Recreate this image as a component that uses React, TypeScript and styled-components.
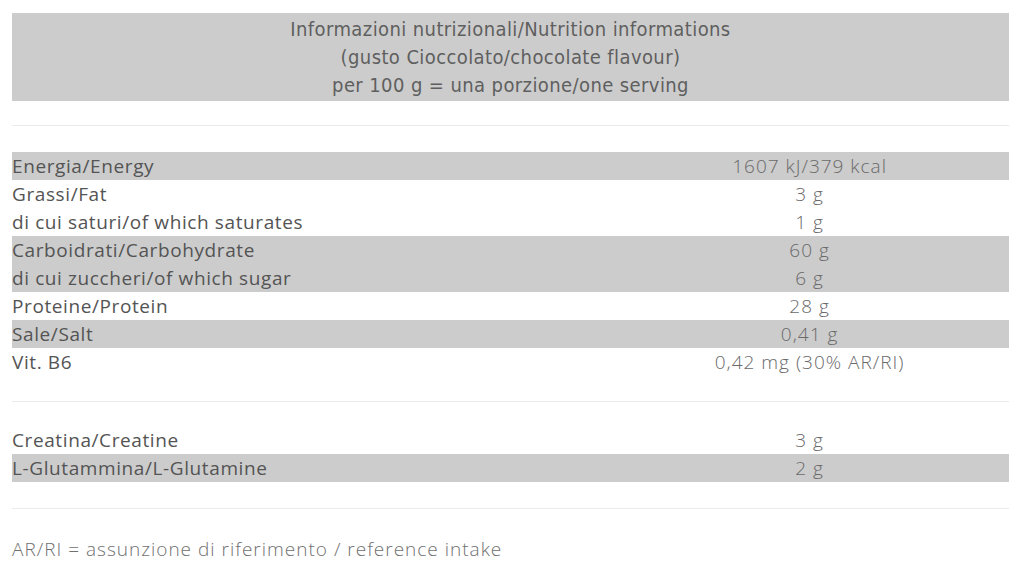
import React from "react";
import styled, { createGlobalStyle } from "styled-components";

const Global = createGlobalStyle`
  html, body { margin: 0; padding: 0; background: #ffffff; }
  body { font-family: "Open Sans", "Lato", sans-serif; }
`;

const Page = styled.div`
  width: 1020px;
  height: 588px;
  box-sizing: border-box;
  padding: 13px 11px 0 12px;
  display: flex;
  flex-direction: column;
`;

const Header = styled.div`
  background: #cccccc;
  padding: 2px 0 2px;
  display: flex;
  flex-direction: column;
  align-items: center;
  color: #5f5f5f;
  font-family: "DejaVu Sans Condensed", "Liberation Sans Narrow", "Lato", sans-serif;
  font-size: 20px;
  letter-spacing: 0.4px;
  line-height: 28px;
`;

const Divider = styled.div<{ $top: number }>`
  height: 1px;
  background: #ebebeb;
  margin-top: ${(p) => p.$top}px;
`;

const Table = styled.div<{ $top: number }>`
  margin-top: ${(p) => p.$top}px;
  display: flex;
  flex-direction: column;
`;

const Row = styled.div<{ $shaded?: boolean }>`
  display: grid;
  grid-template-columns: 60% 40%;
  height: 28px;
  align-items: center;
  background: ${(p) => (p.$shaded ? "#cccccc" : "transparent")};
`;

const Label = styled.span`
  color: #545454;
  font-size: 19px;
  letter-spacing: 0.6px;
  font-weight: 400;
`;

const Value = styled.span`
  color: #6a6a6a;
  font-size: 19px;
  letter-spacing: 1px;
  font-weight: 300;
  text-align: center;
`;

const Footer = styled.div`
  margin-top: 26px;
  line-height: 28px;
  color: #707070;
  font-size: 19px;
  letter-spacing: 1px;
  font-weight: 300;
`;

type Item = { label: string; value: string; shaded?: boolean };

const main: Item[] = [
  { label: "Energia/Energy", value: "1607 kJ/379 kcal", shaded: true },
  { label: "Grassi/Fat", value: "3 g" },
  { label: "di cui saturi/of which saturates", value: "1 g" },
  { label: "Carboidrati/Carbohydrate", value: "60 g", shaded: true },
  { label: "di cui zuccheri/of which sugar", value: "6 g", shaded: true },
  { label: "Proteine/Protein", value: "28 g" },
  { label: "Sale/Salt", value: "0,41 g", shaded: true },
  { label: "Vit. B6", value: "0,42 mg (30% AR/RI)" },
];

const extra: Item[] = [
  { label: "Creatina/Creatine", value: "3 g" },
  { label: "L-Glutammina/L-Glutamine", value: "2 g", shaded: true },
];

const Rows = ({ items }: { items: Item[] }) => (
  <>
    {items.map((it) => (
      <Row key={it.label} $shaded={it.shaded}>
        <Label>{it.label}</Label>
        <Value>{it.value}</Value>
      </Row>
    ))}
  </>
);

export default function App() {
  return (
    <>
      <Global />
      <Page>
        <Header>
          <span>Informazioni nutrizionali/Nutrition informations</span>
          <span>(gusto Cioccolato/chocolate flavour)</span>
          <span>per 100 g = una porzione/one serving</span>
        </Header>
        <Divider $top={24} />
        <Table $top={26}>
          <Rows items={main} />
        </Table>
        <Divider $top={25} />
        <Table $top={24}>
          <Rows items={extra} />
        </Table>
        <Divider $top={26} />
        <Footer>AR/RI = assunzione di riferimento / reference intake</Footer>
      </Page>
    </>
  );
}
